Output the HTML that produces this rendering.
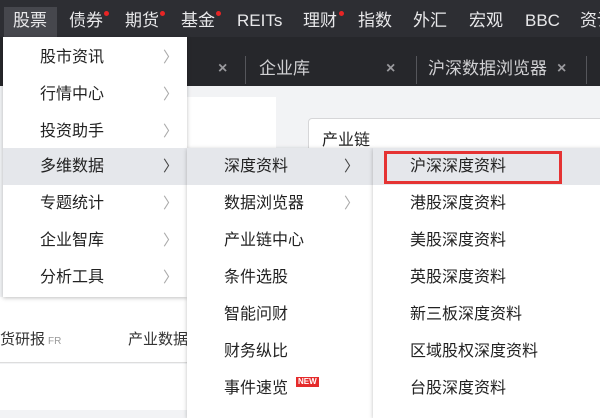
<!DOCTYPE html>
<html><head><meta charset="utf-8"><style>
*{margin:0;padding:0;box-sizing:border-box}
body{width:600px;height:410px;overflow:hidden;position:relative;background:#f2f3f5;font-family:"Liberation Sans","Noto Sans CJK SC",sans-serif;}
.top{position:absolute;left:0;top:0;width:600px;height:37px;background:#2d2e33}
.tabs{position:absolute;left:0;top:37px;width:600px;height:49px;background:#26272b}
.n{position:absolute;top:9px;color:#e8e8ea;font-size:17px;line-height:20px;white-space:nowrap}
.dot{position:absolute;width:5px;height:5px;border-radius:50%;background:#e82525;top:11px}
.sel{position:absolute;left:4px;top:7px;width:53px;height:30px;background:#46474d}
.t{position:absolute;top:59px;color:#d0d0d3;font-size:17px;line-height:20px;white-space:nowrap}
.x{position:absolute;top:59px;color:#9a9a9e;font-size:16px;font-weight:bold;line-height:20px}
.sep{position:absolute;top:56px;width:1px;height:28px;background:#55565b}
.menu{position:absolute;background:#fff;box-shadow:0 1px 4px rgba(0,0,0,.25)}
.it{position:absolute;left:0;right:0;height:37px;font-size:16px;line-height:38px;color:#222;white-space:nowrap}
.it.h{background:#e5e7eb}
.ch{position:absolute;color:#aaa;font-size:15px;top:0}
.ch.d{color:#444}
</style></head><body>
<div class="top"></div>
<div class="sel"></div>
<div class="n" style="left:13px;top:11px">股票</div>
<div class="n" style="left:69px;top:11px">债券</div><div class="dot" style="left:104px"></div>
<div class="n" style="left:125px;top:11px">期货</div><div class="dot" style="left:160px"></div>
<div class="n" style="left:181px;top:11px">基金</div><div class="dot" style="left:216px"></div>
<div class="n" style="left:237px;top:11px">REITs</div>
<div class="n" style="left:303px;top:11px">理财</div><div class="dot" style="left:339px"></div>
<div class="n" style="left:358px;top:11px">指数</div>
<div class="n" style="left:413px;top:11px">外汇</div>
<div class="n" style="left:469px;top:11px">宏观</div>
<div class="n" style="left:525px;top:11px">BBC</div>
<div class="n" style="left:580px;top:11px">资讯</div>
<div class="tabs"></div>
<div class="x" style="left:218px">×</div><div class="sep" style="left:245px"></div>
<div class="t" style="left:259px">企业库</div><div class="x" style="left:386px">×</div><div class="sep" style="left:416px"></div>
<div class="t" style="left:428px">沪深数据浏览器</div><div class="x" style="left:557px">×</div><div class="sep" style="left:586px"></div>
<div style="position:absolute;left:187px;top:97px;width:89px;height:60px;background:#fff"></div>
<div style="position:absolute;left:308px;top:118px;width:300px;height:60px;background:#fff;border:1px solid #d6d6d8;border-radius:4px"></div>
<div style="position:absolute;left:322px;top:126px;font-size:16px;color:#222">产业链</div>
<div style="position:absolute;left:0;top:297px;width:200px;height:66px;background:#fff;border-bottom:1px solid #ddd"></div>
<div style="position:absolute;left:0;top:328px;font-size:15px;color:#333">货研报<span style="font-size:10px;color:#999;margin-left:3px">FR</span></div>
<div style="position:absolute;left:128px;top:328px;font-size:15px;color:#333">产业数据</div>
<div style="position:absolute;left:0;top:364px;width:190px;height:46px;background:#fff"></div>
<div class="menu" style="left:3px;top:37px;width:184px;height:260px">
<div class="it" style="top:2px"><span style="margin-left:37px">股市资讯</span><span class="ch" style="left:160px">〉</span></div>
<div class="it" style="top:39px"><span style="margin-left:37px">行情中心</span><span class="ch" style="left:160px">〉</span></div>
<div class="it" style="top:76px"><span style="margin-left:37px">投资助手</span><span class="ch" style="left:160px">〉</span></div>
<div class="it h" style="top:111px"><span style="margin-left:37px">多维数据</span><span class="ch d" style="left:160px">〉</span></div>
<div class="it" style="top:148px"><span style="margin-left:37px">专题统计</span><span class="ch" style="left:160px">〉</span></div>
<div class="it" style="top:185px"><span style="margin-left:37px">企业智库</span><span class="ch" style="left:160px">〉</span></div>
<div class="it" style="top:222px"><span style="margin-left:37px">分析工具</span><span class="ch" style="left:160px">〉</span></div>
</div>
<div class="menu" style="left:187px;top:148px;width:186px;height:270px">
<div class="it h" style="top:0"><span style="margin-left:37px">深度资料</span><span class="ch d" style="left:157px">〉</span></div>
<div class="it" style="top:37px"><span style="margin-left:37px">数据浏览器</span><span class="ch" style="left:157px">〉</span></div>
<div class="it" style="top:74px"><span style="margin-left:37px">产业链中心</span></div>
<div class="it" style="top:111px"><span style="margin-left:37px">条件选股</span></div>
<div class="it" style="top:148px"><span style="margin-left:37px">智能问财</span></div>
<div class="it" style="top:185px"><span style="margin-left:37px">财务纵比</span></div>
<div class="it" style="top:222px"><span style="margin-left:37px">事件速览</span><span style="position:absolute;left:109px;top:7px;background:#e52b2b;color:#fff;font-size:8px;line-height:10px;padding:0 2px;font-weight:bold">NEW</span></div>
</div>
<div class="menu" style="left:373px;top:148px;width:230px;height:270px">
<div class="it h" style="top:0"><span style="margin-left:37px">沪深深度资料</span></div>
<div class="it" style="top:37px"><span style="margin-left:37px">港股深度资料</span></div>
<div class="it" style="top:74px"><span style="margin-left:37px">美股深度资料</span></div>
<div class="it" style="top:111px"><span style="margin-left:37px">英股深度资料</span></div>
<div class="it" style="top:148px"><span style="margin-left:37px">新三板深度资料</span></div>
<div class="it" style="top:185px"><span style="margin-left:37px">区域股权深度资料</span></div>
<div class="it" style="top:222px"><span style="margin-left:37px">台股深度资料</span></div>
</div>
<div style="position:absolute;left:384px;top:151px;width:178px;height:33px;border:3px solid #e53333"></div>
</body></html>
